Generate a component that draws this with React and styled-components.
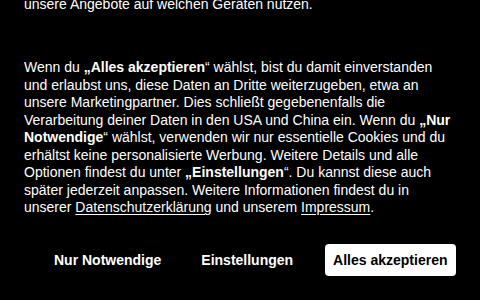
import React from 'react';
import styled, { createGlobalStyle } from 'styled-components';

const GlobalStyle = createGlobalStyle`
  html, body {
    margin: 0;
    padding: 0;
    background: #000;
    overflow: hidden;
  }
  body {
    font-family: "Liberation Sans", Arial, sans-serif;
  }
`;

const Banner = styled.div`
  width: 480px;
  height: 300px;
  box-sizing: border-box;
  padding: 0 24px;
  background: #000;
  color: #fff;
  overflow: hidden;
`;

const Text = styled.p`
  margin: 0;
  font-size: 14px;
  line-height: 17.5px;
  margin-top: ${(p) => p.$top || 0}px;
`;

const B = styled.strong`
  font-weight: 700;
`;

const Link = styled.a`
  color: #fff;
  text-decoration: underline;
  text-underline-offset: 2px;
`;

const Actions = styled.div`
  display: flex;
  justify-content: flex-end;
  align-items: center;
  gap: 23px;
  margin-top: 27px;
`;

const Button = styled.button`
  height: 32px;
  padding: 0 8.5px;
  border: none;
  border-radius: 4px;
  font-family: "Liberation Sans", Arial, sans-serif;
  font-size: 14px;
  font-weight: 700;
  cursor: pointer;
  background: ${(p) => (p.$primary ? '#fff' : 'transparent')};
  color: ${(p) => (p.$primary ? '#000' : '#fff')};
`;

export default function App() {
  return (
    <>
      <GlobalStyle />
      <Banner>
        <Text $top={-4.3}>unsere Angebote auf welchen Geräten nutzen.</Text>
        <Text $top={46.2}>
          Wenn du <B>„Alles akzeptieren</B>“ wählst, bist du damit einverstanden
          und erlaubst uns, diese Daten an Dritte weiterzugeben, etwa an unsere
          Marketingpartner. Dies schließt gegebenenfalls die Verarbeitung deiner
          Daten in den USA und China ein. Wenn du <B>„Nur Notwendige</B>“ wählst,
          verwenden wir nur essentielle Cookies und du erhältst keine
          personalisierte Werbung. Weitere Details und alle Optionen findest du
          unter <B>„Einstellungen</B>“. Du kannst diese auch später jederzeit
          anpassen. Weitere Informationen findest du in unserer{' '}
          <Link href="#">Datenschutzerklärung</Link> und unserem{' '}
          <Link href="#">Impressum</Link>.
        </Text>
        <Actions>
          <Button>Nur Notwendige</Button>
          <Button>Einstellungen</Button>
          <Button $primary>Alles akzeptieren</Button>
        </Actions>
      </Banner>
    </>
  );
}
